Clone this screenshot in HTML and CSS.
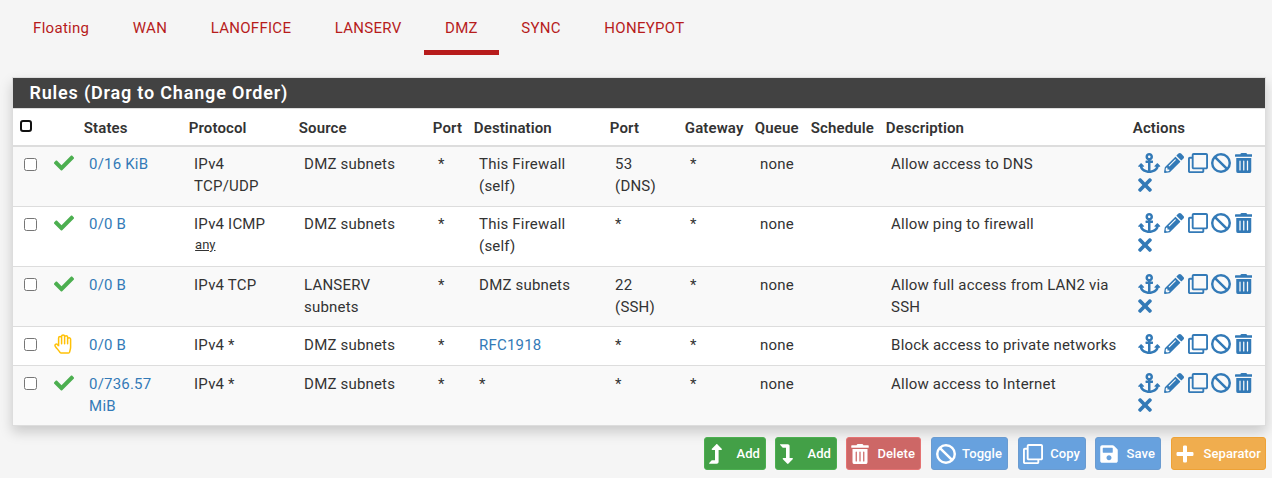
FILE: index.html
```
<!DOCTYPE html>
<html lang="en">
<head>
<meta charset="utf-8">
<title>Firewall Rules</title>
<link rel="stylesheet" href="styles.css">
</head>
<body>
<svg class="sprite" aria-hidden="true">
<symbol id="check" viewBox="0 0 512 512"><path d="M173.898 439.404l-166.4-166.4c-9.997-9.997-9.997-26.206 0-36.204l36.203-36.204c9.997-9.998 26.207-9.998 36.204 0L192 312.69 432.095 72.596c9.997-9.997 26.207-9.997 36.204 0l36.203 36.204c9.997 9.997 9.997 26.206 0 36.204l-294.4 294.401c-9.998 9.997-26.207 9.997-36.204-.001z"/></symbol>
<symbol id="hand" viewBox="0 0 18 20"><path d="M4.6 12.200V4.100a1.500 1.500 0 0 1 3 0V9.800V2.400a1.500 1.500 0 0 1 3 0V9.800V3.200a1.500 1.500 0 0 1 3 0V9.800V5.300a1.500 1.500 0 0 1 3 0V13.300C16.600 15.300 15.800 16.500 15.600 18.200Q15.400 19.100 14.500 19.100H7.200Q6.400 19.100 6 18.400C4.700 16.200 2.700 14.600 1.300 12.300C.3 10.600 2.300 9.100 3.600 10.700L4.600 12.200" class="outline"/></symbol>
<symbol id="anchor" viewBox="0 0 576 512"><path d="M12.971 352h32.394C67.172 454.735 181.944 512 288 512c106.229 0 220.853-57.38 242.635-160h32.394c10.691 0 16.045-12.926 8.485-20.485l-67.029-67.029c-4.686-4.686-12.284-4.686-16.971 0l-67.029 67.029c-7.56 7.56-2.206 20.485 8.485 20.485h35.146c-20.29 54.317-84.963 86.588-144.117 94.015V256h52c6.627 0 12-5.373 12-12v-40c0-6.627-5.373-12-12-12h-52v-5.47c37.281-13.226 63.982-48.83 63.997-90.63C384.031 43.106 341.052-.002 288 0c-52.9.002-95.988 43.117-96 96.018-.01 41.752 26.679 77.305 63.997 90.512V192h-52c-6.627 0-12 5.373-12 12v40c0 6.627 5.373 12 12 12h52v190.015c-58.936-7.399-123.82-39.679-144.117-94.015h35.146c10.691 0 16.045-12.926 8.485-20.485l-67.029-67.029c-4.686-4.686-12.284-4.686-16.971 0L4.485 331.515C-3.074 339.074 2.28 352 12.971 352zM288 64c17.645 0 32 14.355 32 32s-14.355 32-32 32-32-14.355-32-32 14.355-32 32-32z"/></symbol>
<symbol id="pencil" viewBox="0 0 512 512"><path d="M497.9 142.1l-46.1 46.1c-4.7 4.7-12.3 4.7-17 0l-111-111c-4.7-4.7-4.7-12.3 0-17l46.1-46.1c18.7-18.7 49.1-18.7 67.9 0l60.1 60.1c18.8 18.7 18.8 49.1 0 67.9zM284.2 99.8L21.6 362.4.4 483.9c-2.9 16.4 11.4 30.6 27.8 27.8l121.500-21.3 262.6-262.6c4.7-4.7 4.7-12.3 0-17l-111-111c-4.8-4.7-12.4-4.7-17.1 0zM124.1 339.9c-5.5-5.5-5.5-14.3 0-19.8l154-154c5.5-5.5 14.3-5.5 19.8 0s5.5 14.3 0 19.8l-154 154c-5.5 5.5-14.3 5.5-19.8 0zM88 424h48v36.3l-64.5 11.3-31.1-31.1L51.7 376H88v48z"/></symbol>
<symbol id="clone" viewBox="0 0 512 512"><path d="M464 0H144c-26.51 0-48 21.49-48 48v48H48c-26.51 0-48 21.49-48 48v320c0 26.51 21.49 48 48 48h320c26.51 0 48-21.49 48-48v-48h48c26.51 0 48-21.49 48-48V48c0-26.51-21.49-48-48-48zM362 464H54a6 6 0 0 1-6-6V150a6 6 0 0 1 6-6h42v224c0 26.51 21.49 48 48 48h224v42a6 6 0 0 1-6 6zm96-96H150a6 6 0 0 1-6-6V54a6 6 0 0 1 6-6h308a6 6 0 0 1 6 6v308a6 6 0 0 1-6 6z"/></symbol>
<symbol id="ban" viewBox="0 0 512 512"><path d="M367.2 412.5L99.500 144.800C77.100 176.100 64 214.500 64 256c0 106 86 192 192 192c41.500 0 79.900-13.100 111.200-35.500zm45.300-45.300C434.900 335.900 448 297.500 448 256c0-106-86-192-192-192c-41.500 0-79.900 13.100-111.200 35.500L412.500 367.200zM0 256a256 256 0 1 1 512 0A256 256 0 1 1 0 256z"/></symbol>
<symbol id="trash" viewBox="0 0 448 512"><path d="M32 464a48 48 0 0 0 48 48h288a48 48 0 0 0 48-48V128H32zm272-256a16 16 0 0 1 32 0v224a16 16 0 0 1-32 0zm-96 0a16 16 0 0 1 32 0v224a16 16 0 0 1-32 0zm-96 0a16 16 0 0 1 32 0v224a16 16 0 0 1-32 0zM432 32H312l-9.4-18.7A24 24 0 0 0 281.1 0H166.8a23.72 23.72 0 0 0-21.4 13.3L136 32H16A16 16 0 0 0 0 48v32a16 16 0 0 0 16 16h416a16 16 0 0 0 16-16V48a16 16 0 0 0-16-16z"/></symbol>
<symbol id="times" viewBox="0 0 352 512"><path d="M242.72 256l100.07-100.07c12.28-12.28 12.28-32.19 0-44.48l-22.24-22.24c-12.28-12.28-32.19-12.28-44.48 0L176 189.28 75.93 89.21c-12.28-12.28-32.19-12.28-44.48 0L9.21 111.45c-12.28 12.28-12.28 32.19 0 44.48L109.28 256 9.21 356.07c-12.28 12.28-12.28 32.19 0 44.48l22.24 22.24c12.28 12.28 32.2 12.28 44.48 0L176 322.72l100.07 100.07c12.28 12.28 32.2 12.28 44.48 0l22.24-22.24c12.28-12.28 12.28-32.19 0-44.48L242.72 256z"/></symbol>
<symbol id="save" viewBox="0 0 448 512"><path d="M433.941 129.941l-83.882-83.882A48 48 0 0 0 316.118 32H48C21.49 32 0 53.49 0 80v352c0 26.51 21.49 48 48 48h352c26.51 0 48-21.49 48-48V163.882a48 48 0 0 0-14.059-33.941zM224 416c-35.346 0-64-28.654-64-64 0-35.346 28.654-64 64-64s64 28.654 64 64c0 35.346-28.654 64-64 64zm96-304.52V212c0 6.627-5.373 12-12 12H76c-6.627 0-12-5.373-12-12V108c0-6.627 5.373-12 12-12h228.52c3.183 0 6.235 1.264 8.485 3.515l3.48 3.48A11.996 11.996 0 0 1 320 111.48z"/></symbol>
<symbol id="turn-up" viewBox="0 0 13 20"><path d="M.4 19.700H7.700C8.900 19.700 9.600 19 9.600 17.800V6H12.200C12.900 6 13.200 5.300 12.700 4.700L8.500.4C8.100 0 7.500 0 7.100.4L2.900 4.700C2.400 5.300 2.700 6 3.400 6H6V16.300H3.200C2.900 16.300 2.700 16.400 2.500 16.600L.2 19C-.1 19.300 0 19.700 .4 19.700Z"/></symbol>
<symbol id="turn-down" viewBox="0 0 13 20"><path d="M.4.300H7.700C8.900.300 9.600 1 9.600 2.200V14H12.200C12.900 14 13.200 14.700 12.700 15.300L8.500 19.600C8.100 20 7.500 20 7.100 19.600L2.900 15.300C2.400 14.700 2.700 14 3.400 14H6V3.700H3.200C2.900 3.700 2.700 3.600 2.500 3.400L.2 1C-.1.700 0 .300 .4.300Z"/></symbol>
<symbol id="plus" viewBox="0 0 18 20"><path d="M8.200 1.500h1.600q1.200 0 1.200 1.200V8h5.300q1.200 0 1.200 1.200v1.600q0 1.200-1.200 1.200H11v5.300q0 1.200-1.200 1.200H8.200Q7 18.500 7 17.300V12H1.700Q.5 12 .5 10.800V9.200Q.5 8 1.700 8H7V2.700Q7 1.500 8.200 1.500Z"/></symbol>
</svg>

<nav class="tabs">
<a>Floating</a><a>WAN</a><a>LANOFFICE</a><a>LANSERV</a><a class="active">DMZ</a><a>SYNC</a><a>HONEYPOT</a>
</nav>

<section class="panel">
<h2>Rules (Drag to Change Order)</h2>
<table>
<colgroup><col class="c-box"><col class="c-state"><col class="c-states"><col class="c-proto"><col class="c-src"><col class="c-port"><col class="c-dest"><col class="c-dport"><col class="c-gw"><col class="c-queue"><col class="c-sched"><col class="c-desc"><col></colgroup>
<thead><tr><th><i class="select-all"></i></th><th></th><th>States</th><th>Protocol</th><th>Source</th><th>Port</th><th>Destination</th><th>Port</th><th>Gateway</th><th>Queue</th><th>Schedule</th><th>Description</th><th>Actions</th></tr></thead>
<tbody>
<tr><td><i class="box"></i></td><td><svg class="pass"><use href="#check"/></svg></td><td><a>0/16 KiB</a></td><td>IPv4 TCP/UDP</td><td>DMZ subnets</td><td>*</td><td>This Firewall (self)</td><td>53 (DNS)</td><td>*</td><td>none</td><td></td><td>Allow access to DNS</td>
<td><div class="actions"><svg class="w22"><use href="#anchor"/></svg><svg><use href="#pencil"/></svg><svg><use href="#clone"/></svg><svg><use href="#ban"/></svg><svg class="w17"><use href="#trash"/></svg><svg class="w14"><use href="#times"/></svg></div></td></tr>
<tr><td><i class="box"></i></td><td><svg class="pass"><use href="#check"/></svg></td><td><a>0/0 B</a></td><td>IPv4 ICMP<br><u>any</u></td><td>DMZ subnets</td><td>*</td><td>This Firewall (self)</td><td>*</td><td>*</td><td>none</td><td></td><td>Allow ping to firewall</td>
<td><div class="actions"><svg class="w22"><use href="#anchor"/></svg><svg><use href="#pencil"/></svg><svg><use href="#clone"/></svg><svg><use href="#ban"/></svg><svg class="w17"><use href="#trash"/></svg><svg class="w14"><use href="#times"/></svg></div></td></tr>
<tr class="low"><td><i class="box"></i></td><td><svg class="pass"><use href="#check"/></svg></td><td><a>0/0 B</a></td><td>IPv4 TCP</td><td>LANSERV subnets</td><td>*</td><td>DMZ subnets</td><td>22 (SSH)</td><td>*</td><td>none</td><td></td><td>Allow full access from LAN2 via SSH</td>
<td><div class="actions"><svg class="w22"><use href="#anchor"/></svg><svg><use href="#pencil"/></svg><svg><use href="#clone"/></svg><svg><use href="#ban"/></svg><svg class="w17"><use href="#trash"/></svg><svg class="w14"><use href="#times"/></svg></div></td></tr>
<tr class="low single"><td><i class="box"></i></td><td><svg class="block w18"><use href="#hand"/></svg></td><td><a>0/0 B</a></td><td>IPv4 *</td><td>DMZ subnets</td><td>*</td><td><a>RFC1918</a></td><td>*</td><td>*</td><td>none</td><td></td><td>Block access to private networks</td>
<td><div class="actions"><svg class="w22"><use href="#anchor"/></svg><svg><use href="#pencil"/></svg><svg><use href="#clone"/></svg><svg><use href="#ban"/></svg><svg class="w17"><use href="#trash"/></svg></div></td></tr>
<tr class="low"><td><i class="box"></i></td><td><svg class="pass"><use href="#check"/></svg></td><td><a>0/736.57 MiB</a></td><td>IPv4 *</td><td>DMZ subnets</td><td>*</td><td>*</td><td>*</td><td>*</td><td>none</td><td></td><td>Allow access to Internet</td>
<td><div class="actions"><svg class="w22"><use href="#anchor"/></svg><svg><use href="#pencil"/></svg><svg><use href="#clone"/></svg><svg><use href="#ban"/></svg><svg class="w17"><use href="#trash"/></svg><svg class="w14"><use href="#times"/></svg></div></td></tr>
</tbody>
</table>
</section>

<div class="buttons">
<button class="btn green b-add"><svg class="w13"><use href="#turn-up"/></svg><span>Add</span></button>
<button class="btn green b-add"><svg class="w13"><use href="#turn-down"/></svg><span>Add</span></button>
<button class="btn red b-delete"><svg class="w18"><use href="#trash"/></svg><span>Delete</span></button>
<button class="btn blue b-toggle"><svg><use href="#ban"/></svg><span>Toggle</span></button>
<button class="btn blue b-copy"><svg><use href="#clone"/></svg><span>Copy</span></button>
<button class="btn blue b-save"><svg class="w18"><use href="#save"/></svg><span>Save</span></button>
<button class="btn orange b-sep"><svg class="w18"><use href="#plus"/></svg><span>Separator</span></button>
</div>
</body>
</html>
```
FILE: styles.css
```
* { box-sizing: border-box; }
html { overflow: hidden; }
body {
  margin: 0;
  height: 478px;
  background: #f5f5f5;
  color: #333;
  font: 15px/22px Roboto, "Liberation Sans", sans-serif;
  letter-spacing: .19px;
}
.sprite { display: none; }
svg { display: block; width: 20px; height: 20px; fill: currentColor; flex: none; }
.w22 { width: 22.5px; }
.w18 { width: 18px; }
.w17 { width: 17.5px; }
.w14 { width: 14px; }
.w13 { width: 13px; }

.tabs { display: flex; height: 55px; padding-left: 12px; gap: 1px; letter-spacing: .29px; }
.tabs a { padding: 17px 21.4px 0 21.1px; color: #b71c1c; }
.tabs .active { border-bottom: 5px solid #b71c1c; }

.panel {
  width: 1254px;
  height: 349px;
  margin: 22px 0 0 12px;
  border: 1px solid #ddd;
  background: #fff;
  box-shadow: 0 6px 12px rgba(0, 0, 0, .175);
}
h2 {
  margin: 0;
  height: 31px;
  padding-left: 16.4px;
  border-bottom: 1px solid #ddd;
  background: #424242;
  color: #fff;
  font-size: 18px;
  font-weight: 600;
  line-height: 30px;
  letter-spacing: .82px;
}
table { width: 1252px; table-layout: fixed; border-collapse: separate; border-spacing: 0; }
.c-box { width: 35px; }
.c-state { width: 31px; }
.c-states { width: 105px; }
.c-proto { width: 110px; }
.c-src { width: 134px; }
.c-port { width: 41px; }
.c-dest { width: 136px; }
.c-dport { width: 75px; }
.c-gw { width: 70px; }
.c-queue { width: 56px; }
.c-sched { width: 75px; }
.c-desc { width: 247px; }
th {
  height: 38px;
  padding: 1px 0 0 4.8px;
  border-bottom: 2px solid #ddd;
  text-align: left;
  font-weight: 600;
  letter-spacing: .12px;
  white-space: nowrap;
}
td { height: 60px; padding: 6px 8px 0 10.1px; border-bottom: 1px solid #ddd; vertical-align: top; }
.single td { height: 39px; }
.single td:nth-child(12) { white-space: nowrap; }
tbody tr:nth-child(odd) { background: #f9f9f9; }
tbody tr:last-child td { height: 59px; border-bottom: 0; }
td:first-child { padding-left: 10px; }
td:nth-child(2) { padding: 6px 0 0 6px; }
td:last-child { padding: 5.600px 0 0 10px; }
.low td:nth-child(n+2) { padding-top: 7px; }
.low td:last-child { padding-top: 6.600px; }
td a { color: #337ab7; }
td u { font-size: 13px; line-height: 20px; display: block; padding-left: 1px; letter-spacing: 0; }
.pass { color: #4caf50; }
.block { color: #ffc107; }
.outline { fill: none; stroke: currentColor; stroke-width: 1.5; stroke-linejoin: round; }
.box { display: block; width: 13px; height: 13px; margin: 5px 0 0 1px; border: 1px solid #767676; border-radius: 2.5px; background: #fff; }
.select-all { display: block; width: 12px; height: 12px; margin: -4px 0 0 2.2px; border: 2px solid #111; border-radius: 3px; }
.actions { display: flex; flex-wrap: wrap; width: 118px; gap: 2.5px 3.600px; color: #337ab7; }

.buttons { display: flex; justify-content: flex-end; padding: 11px 6px 0 0; }
.btn {
  display: flex;
  align-items: center;
  justify-content: space-between;
  height: 33px;
  margin-left: 9px;
  padding: 0 5px 0 4px;
  border: 1px solid;
  border-radius: 3px;
  color: #fff;
  font: 500 13px/20px Roboto, sans-serif;
  letter-spacing: .08px;
}
.green { background: #43a047; border-color: #4caf50; }
.red { background: #cd6766; border-color: #e57373; }
.blue { background: #67a1de; border-color: #6a9bd0; }
.orange { background: #f0ad4e; border-color: #eea236; }
.b-add { width: 62px; }
.b-delete { width: 75px; }
.b-toggle { width: 77px; margin-left: 10px; }
.b-copy { width: 68px; margin-left: 10px; }
.b-save { width: 66px; }
.b-sep { width: 95px; margin-left: 10px; padding-right: 4px; }
```
